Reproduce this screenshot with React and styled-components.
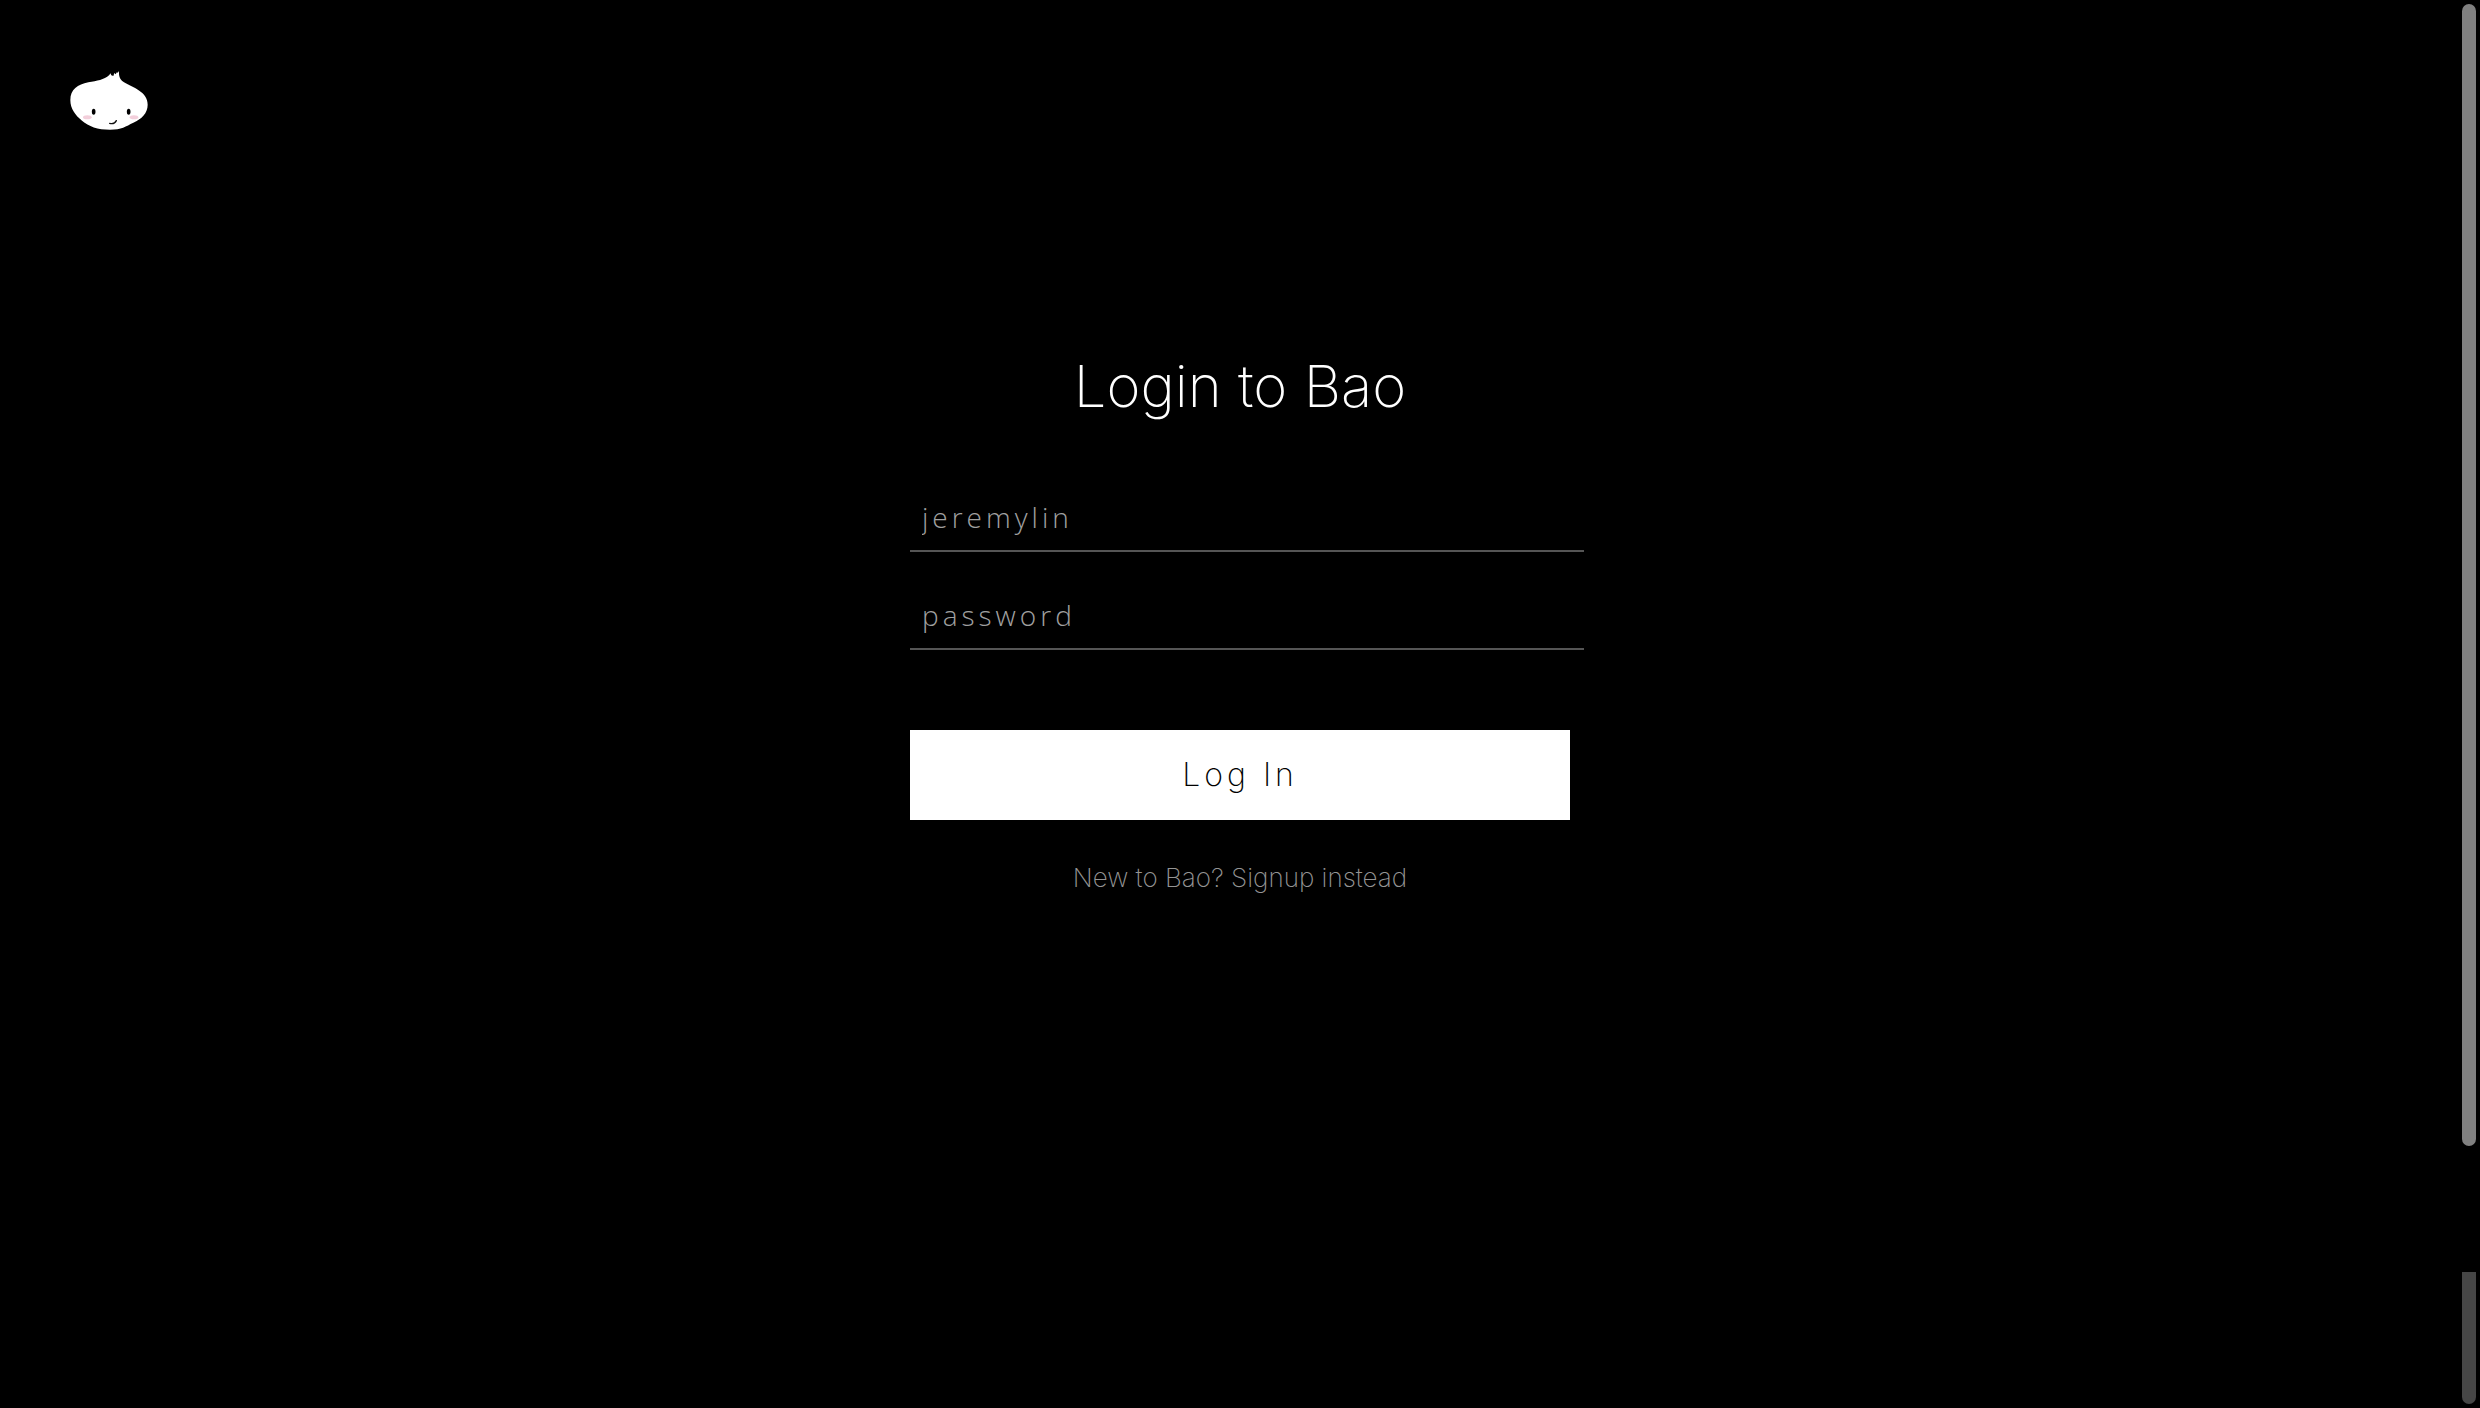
import React from "react";
import styled, { createGlobalStyle } from "styled-components";

const GlobalStyle = createGlobalStyle`
  * { box-sizing: border-box; }
  body {
    margin: 0;
    background: #000;
    color: #fff;
    font-family: Inter, "Liberation Sans", sans-serif;
    font-weight: 200;
  }
`;

const Page = styled.div`
  display: flex;
  flex-direction: column;
  min-height: 100vh;
`;

const Header = styled.header`
  display: flex;
  padding: 70px;
`;

const HomeLink = styled.a`
  display: block;
  line-height: 0;
`;

const Logo = styled.svg`
  width: 78px;
  height: 60px;
`;

const Main = styled.main`
  display: flex;
  flex-direction: column;
  align-items: center;
  padding: 150px 24px 64px;
`;

const Title = styled.h1`
  margin: 0 0 62px;
  font-size: 58px;
  font-weight: 200;
  line-height: 72px;
`;

const Form = styled.form`
  display: flex;
  flex-direction: column;
  width: 100%;
  max-width: 660px;
`;

const Fields = styled.div`
  display: grid;
  gap: 30px;
  margin: 0 -14px 80px 0;
`;

const Field = styled.input`
  width: 100%;
  height: 68px;
  padding: 14px 12px;
  border: 0;
  border-bottom: 2px solid #555;
  border-radius: 0;
  outline: 0;
  background: transparent;
  color: #fff;
  font-family: "Open Sans", "Liberation Sans", sans-serif;
  font-size: 28px;
  font-weight: 300;
  letter-spacing: 4px;

  &::placeholder {
    color: #a0a0a0;
    opacity: 1;
  }
`;

const SubmitButton = styled.button`
  height: 90px;
  padding: 0 0 2px;
  border: 0;
  background: #fff;
  color: #000;
  font-family: inherit;
  font-size: 32px;
  font-weight: 200;
  letter-spacing: 4px;
  cursor: pointer;
`;

const SignupLink = styled.a`
  margin-top: 42px;
  color: #949494;
  font-size: 26px;
  line-height: 32px;
  text-decoration: none;
`;

const ScrollRail = styled.div`
  position: fixed;
  top: 4px;
  right: 4px;
  bottom: 4px;
  display: flex;
  flex-direction: column;
  width: 14px;
`;

const ScrollThumb = styled.div`
  flex: 1142;
  border-radius: 7px;
  background: #808080;
`;

const ScrollGap = styled.div`
  flex: 126;
`;

const ScrollEnd = styled.div`
  flex: 132;
  border-radius: 0 0 7px 7px;
  background: #464646;
`;

function BaoLogo() {
  return (
    <Logo viewBox="60 60 234 180" aria-hidden="true">
      <path
        fill="#fff"
        d="M61 150C61 119 83 103 115 97C142 92 161 90 178 75L181 70L184 76L190 78L193 69L197 73L201 66L203 69L207 63C206 80 210 89 222 97C250 113 293 126 293 164C293 189 275 207 250 218C227 229 215 239 180 239C143 239 116 229 96 212C76 196 61 176 61 150Z"
      />
      <ellipse cx="112" cy="202" rx="13" ry="6" fill="#f3cfdb" />
      <ellipse cx="252" cy="202" rx="13" ry="6" fill="#f3cfdb" />
      <ellipse cx="131" cy="185" rx="5.5" ry="9" fill="#000" />
      <ellipse cx="236" cy="185" rx="5.5" ry="9" fill="#000" />
      <path d="M179 220Q193 224 199 212" fill="none" stroke="#111" strokeWidth="4" strokeLinecap="round" />
    </Logo>
  );
}

export default function App() {
  return (
    <Page>
      <GlobalStyle />
      <Header>
        <HomeLink href="#" aria-label="Bao">
          <BaoLogo />
        </HomeLink>
      </Header>
      <Main>
        <Title>Login to Bao</Title>
        <Form onSubmit={(event) => event.preventDefault()}>
          <Fields>
            <Field type="text" name="username" placeholder="jeremylin" aria-label="Username" />
            <Field type="password" name="password" placeholder="password" aria-label="Password" />
          </Fields>
          <SubmitButton type="submit">Log In</SubmitButton>
        </Form>
        <SignupLink href="#signup">New to Bao? Signup instead</SignupLink>
      </Main>
      <ScrollRail aria-hidden="true">
        <ScrollThumb />
        <ScrollGap />
        <ScrollEnd />
      </ScrollRail>
    </Page>
  );
}
